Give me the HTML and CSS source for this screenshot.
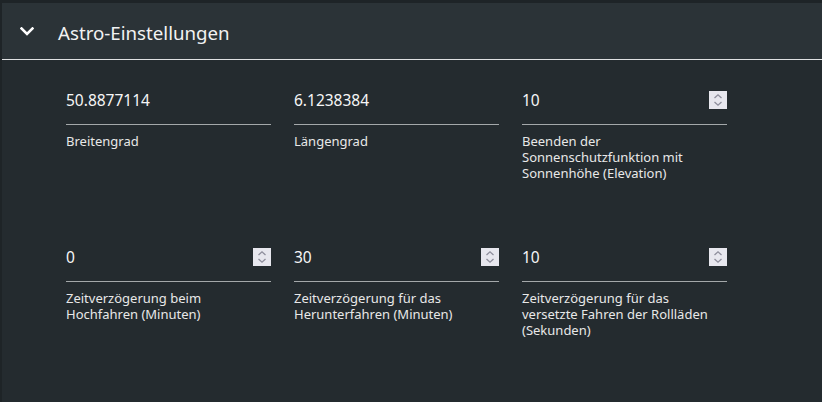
FILE: index.html
```html
<!DOCTYPE html>
<html lang="de">
<head>
<meta charset="utf-8">
<title>Astro-Einstellungen</title>
<link rel="stylesheet" href="styles.css">
</head>
<body>
<section class="panel">
  <header class="panel-header">
    <svg class="chevron" width="14" height="9" viewBox="0 0 14 9"><path d="M1.5 1.5 L7 7 L12.5 1.5" fill="none" stroke="#ffffff" stroke-width="2.6" stroke-linecap="square"/></svg>
    <h2 class="panel-title">Astro-Einstellungen</h2>
  </header>
  <div class="panel-body">
    <div class="grid">
      <div class="field">
        <div class="input"><span class="value">50.8877114</span></div>
        <div class="label">Breitengrad</div>
      </div>
      <div class="field">
        <div class="input"><span class="value">6.1238384</span></div>
        <div class="label">Längengrad</div>
      </div>
      <div class="field">
        <div class="input"><span class="value">10</span>
          <span class="spin"><svg width="18" height="18" viewBox="0 0 18 18"><path d="M5.5 7 L9 3.8 L12.5 7" fill="none" stroke="#8e8e9c" stroke-width="1.3"/><path d="M5.5 11 L9 14.2 L12.5 11" fill="none" stroke="#8e8e9c" stroke-width="1.3"/></svg></span>
        </div>
        <div class="label">Beenden der Sonnenschutzfunktion mit Sonnenhöhe (Elevation)</div>
      </div>
      <div class="field">
        <div class="input"><span class="value">0</span>
          <span class="spin"><svg width="18" height="18" viewBox="0 0 18 18"><path d="M5.5 7 L9 3.8 L12.5 7" fill="none" stroke="#8e8e9c" stroke-width="1.3"/><path d="M5.5 11 L9 14.2 L12.5 11" fill="none" stroke="#8e8e9c" stroke-width="1.3"/></svg></span>
        </div>
        <div class="label">Zeitverzögerung beim Hochfahren (Minuten)</div>
      </div>
      <div class="field">
        <div class="input"><span class="value">30</span>
          <span class="spin"><svg width="18" height="18" viewBox="0 0 18 18"><path d="M5.5 7 L9 3.8 L12.5 7" fill="none" stroke="#8e8e9c" stroke-width="1.3"/><path d="M5.5 11 L9 14.2 L12.5 11" fill="none" stroke="#8e8e9c" stroke-width="1.3"/></svg></span>
        </div>
        <div class="label">Zeitverzögerung für das Herunterfahren (Minuten)</div>
      </div>
      <div class="field">
        <div class="input"><span class="value">10</span>
          <span class="spin"><svg width="18" height="18" viewBox="0 0 18 18"><path d="M5.5 7 L9 3.8 L12.5 7" fill="none" stroke="#8e8e9c" stroke-width="1.3"/><path d="M5.5 11 L9 14.2 L12.5 11" fill="none" stroke="#8e8e9c" stroke-width="1.3"/></svg></span>
        </div>
        <div class="label">Zeitverzögerung für das versetzte Fahren der Rollläden (Sekunden)</div>
      </div>
    </div>
  </div>
</section>
</body>
</html>
```
FILE: styles.css
```css
html, body {
  margin: 0;
  padding: 0;
  height: 100%;
}
body {
  background: #1e2427;
  font-family: "Noto Sans", "Open Sans", sans-serif;
  color: #ffffff;
  overflow: hidden;
}
.panel {
  margin: 3px 0 0 2px;
  height: calc(100% - 3px);
  background: #242b2f;
  display: flex;
  flex-direction: column;
}
.panel-header {
  flex: 0 0 auto;
  background: #2b3337;
  border-bottom: 1px solid #dfe1e2;
  display: flex;
  align-items: center;
  padding-left: 18px;
  box-sizing: border-box;
  height: 57px;
}
.chevron {
  display: block;
  margin-top: 0;
}
.panel-title {
  margin: 3px 0 0 24px;
  font-size: 18.7px;
  font-weight: 400;
  color: #f2f2f2;
}
.panel-body {
  flex: 1 1 auto;
  padding: 32px 0 0 64px;
}
.grid {
  display: grid;
  grid-template-columns: 205px 205px 205px;
  column-gap: 23px;
  row-gap: 68px;
}
.field {
  display: flex;
  flex-direction: column;
}
.input {
  height: 33px;
  box-sizing: border-box;
  border-bottom: 1px solid #a4a8aa;
  display: flex;
  align-items: flex-start;
  justify-content: space-between;
}
.value {
  font-size: 15.5px;
  line-height: 18px;
  color: #f6f6f6;
  margin-top: -1px;
}
.spin {
  width: 18px;
  height: 18px;
  background: #e7e7ee;
  display: block;
  margin-top: -1px;
}
.spin svg {
  display: block;
}
.label {
  margin-top: 8px;
  font-size: 13px;
  line-height: 16px;
  color: #e8e8e8;
}
```
